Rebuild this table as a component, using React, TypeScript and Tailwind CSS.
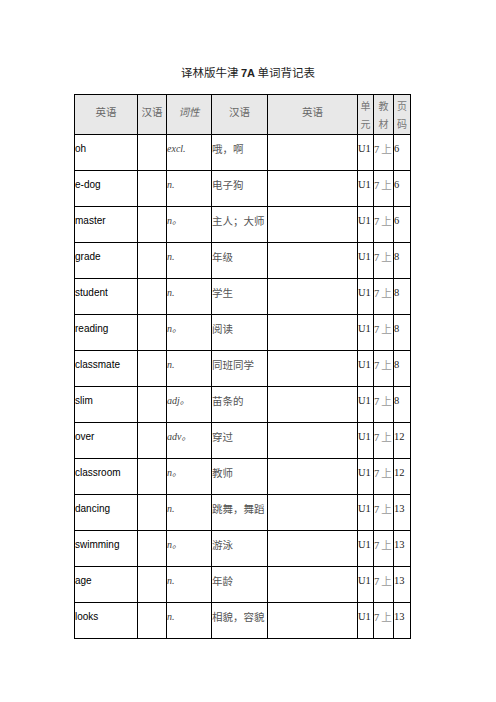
import React from "react";

const rows: [string, string, string, string][] = [
  ["oh", "excl.", "哦，啊", "6"],
  ["e-dog", "n.", "电子狗", "6"],
  ["master", "n。", "主人；大师", "6"],
  ["grade", "n.", "年级", "8"],
  ["student", "n.", "学生", "8"],
  ["reading", "n。", "阅读", "8"],
  ["classmate", "n.", "同班同学", "8"],
  ["slim", "adj。", "苗条的", "8"],
  ["over", "adv。", "穿过", "12"],
  ["classroom", "n。", "教师", "12"],
  ["dancing", "n.", "跳舞，舞蹈", "13"],
  ["swimming", "n。", "游泳", "13"],
  ["age", "n.", "年龄", "13"],
  ["looks", "n.", "相貌，容貌", "13"],
];

const th = "border border-black font-normal text-[10.5px] text-[#666] pb-[6px] font-['Noto_Sans_CJK_SC',sans-serif]";
const thStack = "border border-black font-normal text-[10px] leading-[18px] text-[#777] p-0 font-['Noto_Sans_CJK_SC',sans-serif]";
const td = "border border-black align-top p-0 pt-[7px] leading-[14px] whitespace-nowrap overflow-hidden";

export default function App() {
  return (
    <div className="w-[496px] h-[702px] bg-white">
      <div className="pt-[64px] h-[94px]">
        <div className="text-center text-[11.5px] leading-[16px] text-[#222] font-['Noto_Sans_CJK_SC',sans-serif]">
          译林版牛津 <span className="font-bold text-[11px] font-['Liberation_Sans',sans-serif]">7A</span> 单词背记表
        </div>
      </div>
      <div className="pl-[74px]">
        <table className="table-fixed border-collapse w-[336px]">
          <colgroup>
            <col className="w-[63px]" />
            <col className="w-[29px]" />
            <col className="w-[45px]" />
            <col className="w-[56px]" />
            <col className="w-[90px]" />
            <col className="w-[16px]" />
            <col className="w-[20px]" />
            <col className="w-[17px]" />
          </colgroup>
          <thead>
            <tr className="bg-[#e8e8e8] h-[40px]">
              <th className={th}>英语</th>
              <th className={th}>汉语</th>
              <th className={th + " italic"}>词性</th>
              <th className={th}>汉语</th>
              <th className={th}>英语</th>
              <th className={thStack}>单<br />元</th>
              <th className={thStack}>教<br />材</th>
              <th className={thStack}>页<br />码</th>
            </tr>
          </thead>
          <tbody>
            {rows.map(([en, pos, zh, page]) => (
              <tr key={en} className="h-[36px]">
                <td className={td + " text-[10px] text-black font-['Liberation_Sans',sans-serif]"}>{en}</td>
                <td className="border border-black p-0"></td>
                <td className={td + " text-[10px] italic text-[#444] font-['Liberation_Serif','Noto_Sans_CJK_SC',serif]"}>{pos}</td>
                <td className={td + " text-[10.5px] text-[#555] font-['Noto_Sans_CJK_SC',sans-serif]"}>{zh}</td>
                <td className="border border-black p-0"></td>
                <td className={td + " text-[10.5px] text-[#222] font-['Liberation_Serif',serif]"}>U1</td>
                <td className={td + " text-[10.5px] text-[#555] font-['Liberation_Serif',serif]"}>
                  7<span className="text-[#999] ml-[2px] font-['Noto_Sans_CJK_SC',sans-serif]">上</span>
                </td>
                <td className={td + " text-[10.5px] text-[#222] font-['Liberation_Serif',serif]"}>{page}</td>
              </tr>
            ))}
          </tbody>
        </table>
      </div>
    </div>
  );
}
